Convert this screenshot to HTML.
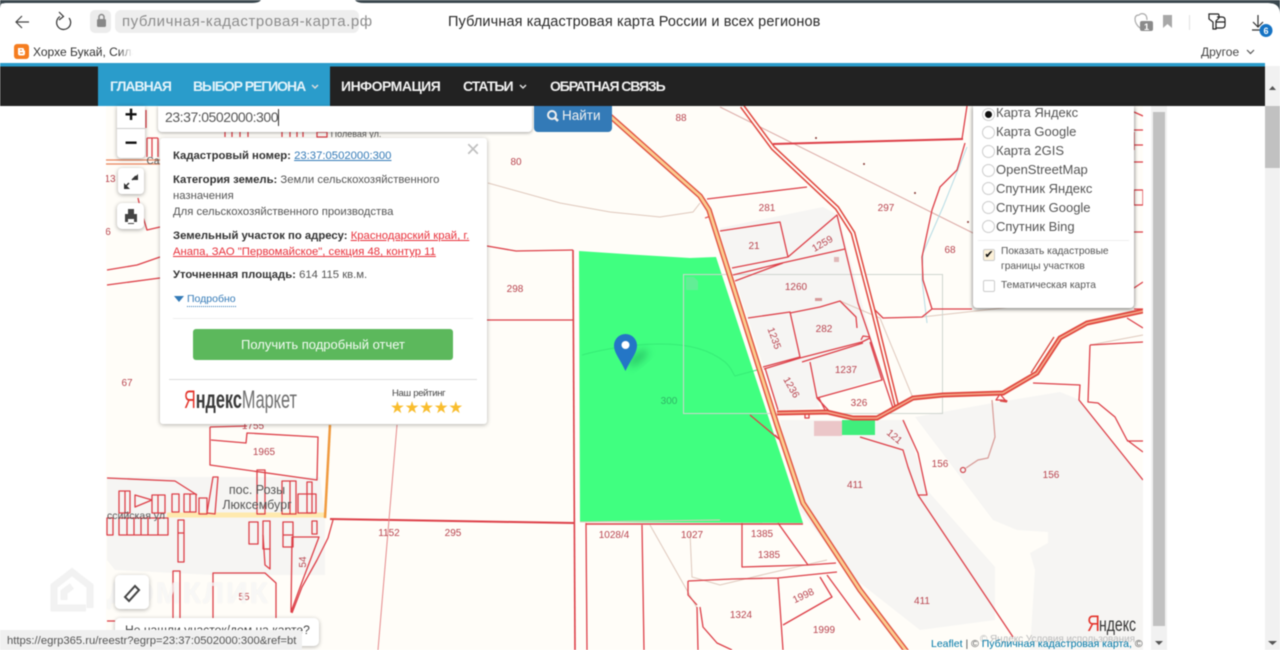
<!DOCTYPE html>
<html lang="ru"><head><meta charset="utf-8"><title>Публичная кадастровая карта</title>
<style>
html,body{margin:0;padding:0;width:1280px;height:650px;overflow:hidden;background:#fff}
body{font-family:"Liberation Sans","Noto Sans CJK SC",sans-serif;position:relative;color:#333}
#w{position:absolute;inset:0;width:1280px;height:650px;overflow:hidden;filter:blur(.4px)}
.a{position:absolute;white-space:nowrap}
svg{position:absolute;left:0;top:0}
.nav{font-weight:bold;font-size:14px;color:#f2f2f2;top:78px;line-height:16px}
.p{font-size:11.3px;color:#555;line-height:14px;left:173px}
.p b{color:#333}
.p a{text-decoration:underline}
.rb{left:996px;font-size:13px;color:#555;line-height:15px}
.r{left:982px;width:11px;height:11px;border:1px solid #ccc;border-radius:50%;background:#fff}
.ck{font-size:10.2px;color:#555;line-height:12px;left:1001px}
</style></head><body><div id="w">
<svg width="1280" height="650" viewBox="0 0 1280 650" font-family="Liberation Sans, sans-serif">
<defs><clipPath id="m"><rect x="106" y="106" width="1037" height="544"/></clipPath>
<filter id="b" x="-50%" y="-50%" width="200%" height="200%"><feGaussianBlur stdDeviation="4"/></filter></defs>
<g clip-path="url(#m)">
<rect x="106" y="106" width="1037" height="544" fill="#fffdf8"/>
<g fill="#f6f5f3">
<path d="M720 228 823 207 838 215 882 377 817 398 820 408 778 410 722 240Z"/>
<path d="M915 417 993 403 1060 392 1080 400 1143 480V650H1030L1035 570 1030 553 1048 543V532L1017 530 993 520Z"/>
<path d="M780 420H905L927 490 995 567V620L920 630 850 575 800 510Z"/>
<path d="M107 477H320L325 518V575H213L115 570 107 560Z"/>
</g>
<path d="M167 515H325" stroke="#ffe9ae" stroke-width="5" fill="none"/>
<path d="M579 251 640 255 690 258 716 257 803 523 580 522Z" fill="#40ff80"/>
<rect x="814" y="421" width="28" height="15" fill="#ebc6c8"/>
<rect x="842" y="420" width="33" height="15" fill="#40ee7c"/>
<!-- faint brown -->
<g fill="none" stroke="#dfc8bc" stroke-width="1">
<path d="M488 183 560 203 610 212 660 217 693 212 700 203"/>
<path d="M650 525 697 608M690 533 692 577 720 585 770 573 827 560"/>
<path d="M580 522 720 520"/>
<path d="M582 355C600 350 630 344 660 344S710 350 725 362C732 368 733 374 735 376L757 370" stroke="#36ec76"/>
<path d="M840 301 880 318 913 398M922 317 1030 305M1090 345 1143 335"/>
</g>
<path d="M720 107 973 233" stroke="#dcaaa6" stroke-width="1" fill="none"/>
<path d="M967 147 943 207 923 253 922 280 927 323" stroke="#b5dbe4" stroke-width="1" fill="none"/>
<path d="M992 400 995 437 988 458 978 460 966 468" stroke="#d79a96" stroke-width="1.2" fill="none"/>
<circle cx="963" cy="470" r="2.5" fill="none" stroke="#d0474f" stroke-width="1.2"/>
<!-- faint image rect -->
<rect x="683.500" y="274.500" width="259" height="139" fill="none" stroke="#cfd5cf" stroke-width="1"/>
<path d="M686 277h8l4 4v9h-12z" fill="#62ee96"/>
<!-- thin red lines -->
<g fill="none" stroke="#dd4049" stroke-width="1.3" stroke-linejoin="round">
<path d="M707 199 807 187"/>
<path d="M720 231 780 222 788 257 732 268"/>
<path d="M788 257 837 215 858 303 870 338 893 408"/>
<path d="M733 275 782 263 845 249M735 281 783 263"/>
<path d="M748 318 790 312 800 357 763 367M790 313 820 307 840 301 856 317 857 328M764 369 800 358 862 342 870 338M802 362 863 343"/>
<path d="M810 362 817 398 882 380 870 342M765 368 778 410M817 398 830 412M819 398 826 412"/>
<path d="M773 144 963 139" stroke-width="2"/>
<path d="M967 106 962 139M965 143 957 170 940 187 932 210 922 257 923 280 932 309 972 309M932 309 922 317 883 318 875 310"/>
<path d="M573 250 575 650" stroke-width="1.600"/>
<path d="M487 246 516 251 573 250M487 320 573 320M586 523 587 650M642 525 644 650"/>
<path d="M107 270 137 265 160 257M107 285 160 278M138 198 140 207 147 230 160 227"/>
<path d="M586 524H803" stroke-width="1.600"/>
<path d="M330 519 574 523" stroke-width="2"/>
<path d="M397 425 378 650" stroke="#e58a8c" stroke-width="1"/>
<path d="M107 621H115"/>
<path d="M742 523V567L808 565 836 563M778 523 808 565M688 581 732 579 778 578 837 572M688 581V595L697 605M697 607 698 650M700 607 703 627 717 643 732 650M778 578 783 650M783 625 832 597 820 577M827 575 860 620"/>
<path d="M210 427 210 465 317 480 318 437 247 433 246 443 211 440M247 426 210 427"/>
<path d="M107 478 175 481 197 495"/>
<rect x="119" y="491" width="11" height="22"/><path d="M125 491V513M135 495 152 500 135 507ZM152 495H165V513H152ZM158 495V513"/>
<rect x="172" y="494" width="7" height="18"/><rect x="184" y="494" width="12" height="18"/><path d="M190 494V512"/><rect x="199" y="498" width="8" height="16"/><path d="M207 513 213 477H218L215 514Z"/>
<rect x="257" y="470" width="8" height="44"/><rect x="282" y="481" width="14" height="33"/><path d="M290 481V514"/><rect x="298" y="494" width="18" height="19"/><rect x="307" y="482" width="5" height="31"/>
<rect x="107" y="518" width="6" height="17"/><rect x="119" y="518" width="49" height="17"/><path d="M127 518V535M134 518V535M141 518V535M148 518V535M158 518V535"/>
<rect x="178" y="520" width="6" height="42"/><path d="M178 533H184"/><rect x="249" y="522" width="9" height="22"/><rect x="263" y="521" width="7" height="28"/><path d="M263 535 265 565 270 569V549"/><rect x="283" y="522" width="10" height="25"/><path d="M283 535H293"/><rect x="312" y="521" width="5" height="13"/>
<path d="M292 537H319L302 582 291 612ZM333 520 328 538 317 560 302 587 292 613"/>
<rect x="173" y="571" width="7" height="70"/><path d="M213 640V573H265L276 583V640"/>
<path d="M147 138V157M152 138V157M158 138V157M147 138H158M120 112 121 122"/>
<path d="M146 110V128"/><path d="M106 160H160M106 164H160" stroke="#e9855e"/>
<path d="M225 130V137M232 130V137M240 130V137M248 130V137M282 130V137M290 130V137M297 130V137M303 130V137M317 132H327V137H317Z"/>
<path d="M1090 345 1143 342M1090 345 1088 402 1098 403 1115 417 1127 440 1143 452M1127 441H1143"/>
<path d="M1033 383 1080 385 1079 400 1143 480"/>
<path d="M860 437 903 450 908 467 918 495 927 495 918 453 903 420M918 495 1013 637"/>
<path d="M1127 318 1143 328M1134 112 1143 116M1134 145H1143M1134 130H1143M1134 132V150M1134 162H1143M1134 190H1143V205H1134ZM1134 232H1143M1134 288 1143 282M1134 309H1143"/>
<path d="M1000 394 1005 400 1007 401 1002 400H996Z"/>
<path d="M775 435 780 440 750 415"/><rect x="805" y="414" width="4" height="4"/>
<path d="M861 340 863 336 870 337"/>
<path d="M705 218 711 216 775 418" stroke="#e65a55"/>
</g>
<!-- roads -->
<path d="M610 116 700 196 709 210 777 425 803 503 860 590 907 652" fill="none" stroke="#e0503f" stroke-width="5.500" stroke-linejoin="round"/>
<path d="M610 116 700 196 709 210 777 425 803 503 860 590 907 652" fill="none" stroke="#fbcd90" stroke-width="2.800" stroke-linejoin="round"/>
<path d="M742 106 773 148 837 208 853 233 873 310 897 407" fill="none" stroke="#e0473f" stroke-width="5"/>
<path d="M742 106 773 148 837 208 853 233 873 310 897 407" fill="none" stroke="#fffdf8" stroke-width="2"/>
<path d="M777 413 827 412 853 418 877 418 913 398 943 395 1003 393 1037 373 1060 338 1087 323 1143 311" fill="none" stroke="#e0473f" stroke-width="5"/>
<path d="M777 413 827 412 853 418 877 418 913 398 943 395 1003 393 1037 373 1060 338 1087 323 1143 311" fill="none" stroke="#f4a98a" stroke-width="1.600"/>
<path d="M330 425 325 518" stroke="#f09a3e" stroke-width="2.500"/>
<path d="M1031 373 1054 337M1000 401 1007 402" stroke="#d8473f" stroke-width="1.300" fill="none"/>
<g fill="#8a3d3a"><circle cx="816" cy="138" r="1"/><circle cx="864" cy="164" r="1"/><circle cx="915" cy="193" r="1"/><circle cx="968" cy="222" r="1"/></g>
<rect x="815" y="298" width="7" height="3" fill="#d69a9a"/><rect x="834" y="257" width="5" height="5" fill="#e0b8b8"/>
<!-- labels -->
<g font-size="10" fill="#b8444f" text-anchor="middle">
<text x="516" y="165">80</text><text x="681" y="121">88</text><text x="767" y="211">281</text><text x="886" y="211">297</text><text x="754" y="249">21</text><text x="822" y="247" transform="rotate(-30 822 243)">1259</text><text x="950" y="253">68</text><text x="796" y="290">1260</text><text x="515" y="292">298</text><text x="775" y="342" transform="rotate(70 775 338)">1235</text><text x="824" y="332">282</text><text x="846" y="373">1237</text><text x="792" y="391" transform="rotate(60 792 387)">1236</text><text x="859" y="406">326</text><text x="669" y="404" fill="#2fb565">300</text><text x="895" y="440" transform="rotate(40 895 436)">121</text><text x="940" y="467">156</text><text x="1051" y="478">156</text><text x="855" y="488">411</text><text x="922" y="604">411</text><text x="264" y="455">1965</text><text x="389" y="536">1152</text><text x="453" y="536">295</text><text x="614" y="538">1028/4</text><text x="692" y="538">1027</text><text x="762" y="537">1385</text><text x="769" y="558">1385</text><text x="302" y="566" transform="rotate(-90 302 562)">54</text><text x="244" y="600">55</text><text x="741" y="618">1324</text><text x="803" y="599" transform="rotate(-25 803 595)">1998</text><text x="824" y="633">1999</text><text x="253" y="429">1755</text><text x="127" y="386">67</text><text x="110" y="182">13</text><text x="108" y="235">6</text>
</g>
<g fill="#555" text-anchor="middle"><text x="257" y="494" font-size="12.500">пос. Розы</text><text x="257" y="509" font-size="12.500">Люксембург</text><text x="136" y="519" font-size="10.500">ссийская ул</text><text x="356" y="137" font-size="9">Полевая ул.</text><text x="153" y="164" font-size="10">Са</text></g>
<text x="1087" y="631" font-size="22" fill="#e3342b" textLength="13" lengthAdjust="spacingAndGlyphs">Я</text><text x="1099" y="631" font-size="19" fill="#333" textLength="37" lengthAdjust="spacingAndGlyphs">ндекс</text>
<text x="980" y="642" font-size="10" fill="#bbb" textLength="155" lengthAdjust="spacing">© Яндекс  Условия использования</text>
<!-- pin -->
<ellipse cx="638" cy="358" rx="12" ry="5" transform="rotate(-40 638 358)" fill="#1fa558" opacity=".55" filter="url(#b)"/>
<path d="M625.500 371C620 359 614 353 614 345.500A11.500 11.500 0 0 1 637 345.500C637 353 631 359 625.500 371Z" fill="#2476c6"/>
<circle cx="625.500" cy="345" r="4" fill="#fff"/>
</g>
<!-- inner scrollbar -->
<rect x="1143" y="106" width="8" height="544" fill="#fff"/>
<rect x="1151" y="106" width="16" height="544" fill="#f1f1f1"/>
<rect x="1153" y="112" width="12" height="514" fill="#c1c1c1"/>
<path d="M1155 641h8l-4 4z" fill="#555"/>
<!-- outer scrollbar -->
<rect x="1265" y="66" width="15" height="584" fill="#f1f1f1"/>
<rect x="1265" y="106" width="15" height="62" fill="#c1c1c1"/>
<path d="M1269 90h7l-3.500-4z" fill="#555"/><path d="M1268 641h9l-4.500 4z" fill="#555"/>
<!-- chrome -->
<rect width="1280" height="3.500" fill="#3a474e"/>
<path d="M0 8Q0 3 6 3H252Q259 3 261 0H355Q357 3 364 3H1268Q1280 3 1280 14V63H0Z" fill="#fff"/>
<path d="M0 0H6Q0 3 0 8ZM1268 3H1280V14Q1280 3 1268 3Z" fill="#3a474e"/>
<rect y="63" width="1265" height="3.500" fill="#2a9ccb"/><rect x="1265" y="63" width="15" height="3" fill="#fff"/>
<rect y="66.500" width="1265" height="39.500" fill="#222"/>
<rect x="98" y="66" width="232" height="40" fill="#2a9ccb"/>
<!-- chrome icons -->
<g fill="none" stroke="#333" stroke-width="1.200">
<path d="M16 22H29M22 16 16 22 22 28" stroke="#444"/>
<path d="M69 18A7 7 0 1 1 60 16.500" /><path d="M59 12 63.500 16.500 59 20"/>
<path d="M1140 28Q1135 24 1135 19 1135 15 1139 15 1141 13 1144 14 1147 15 1147 20" stroke="#aaa"/>
<path d="M1163 15H1172V28L1167.500 24 1163 28Z" fill="#a8a8a8" stroke="none"/>
<path d="M1189.500 15V30" stroke="#e5e5e5"/>
<path d="M1209 14H1218Q1219 14 1219 16V18L1216 21V29H1213V22L1209 19ZM1217 17H1222Q1225 17 1225 20V25Q1225 28 1222 28H1216M1216 22H1225" stroke="#222"/>
<path d="M1258 15V27M1253 22 1258 27 1263 22M1252 30H1262" stroke="#333"/>
<path d="M1247 50 1250.500 53.500 1254 50" stroke="#555"/>
<path d="M312 85 315 88 318 85M520 85 523 88 526 85" stroke="#ddd" stroke-width="1.500"/>
</g>
<rect x="90" y="10" width="21" height="23" rx="5" fill="#ececec"/>
<rect x="97" y="19" width="9" height="8" rx="1.500" fill="#888"/><path d="M99 19V17A2.500 2.500 0 0 1 104 17V19" fill="none" stroke="#888" stroke-width="1.500"/>
<rect x="115" y="10" width="244" height="23" rx="6" fill="#eeeeee"/>
<rect x="1140" y="21" width="13" height="10" rx="2" fill="#8a8a8a"/><text x="1146.500" y="30" font-size="9.500" font-weight="bold" fill="#fff" text-anchor="middle">1</text>
<circle cx="1266" cy="30.500" r="6.500" fill="#1573c4"/><text x="1266" y="34" font-size="9" font-weight="bold" fill="#fff" text-anchor="middle">6</text>
<rect x="14" y="44" width="15" height="15" rx="3" fill="#f57d20"/><path d="M18 48H22.500A1.500 1.500 0 0 1 24 50V50.500H25V53.500A2 2 0 0 1 23 55.500H20A2 2 0 0 1 18 53.500Z" fill="#fff"/><path d="M20 50H22M20 53H23" stroke="#f57d20"/>
<!-- DomClick logo -->
<path d="M90 608V586L72 572 54 586V608H86M72 586 64 592V600" fill="none" stroke="#f2f2f2" stroke-width="7"/>
</svg>
<!-- chrome text -->
<div class="a" style="left:122px;top:14px;font-size:15px;color:#8c8c8c;line-height:16px;letter-spacing:.55px">публичная-кадастровая-карта.рф</div>
<div class="a" style="left:448px;top:14px;font-size:14.500px;color:#2a2a2a;line-height:16px;letter-spacing:.12px">Публичная кадастровая карта России и всех регионов</div>
<div class="a" style="left:33px;top:45px;font-size:12px;color:#333;line-height:14px;width:100px;overflow:hidden;-webkit-mask-image:linear-gradient(90deg,#000 85%,transparent)">Хорхе Букай, Сила</div>
<div class="a" style="left:1201px;top:45px;font-size:12px;color:#444;line-height:14px">Другое</div>
<!-- nav -->
<div class="a nav" style="left:110px;color:#e4f3fa;letter-spacing:-1px">ГЛАВНАЯ</div>
<div class="a nav" style="left:193px;color:#e4f3fa;letter-spacing:-1.05px">ВЫБОР РЕГИОНА</div>
<div class="a nav" style="left:341px;letter-spacing:-.5px">ИНФОРМАЦИЯ</div>
<div class="a nav" style="left:463px;letter-spacing:-1px">СТАТЬИ</div>
<div class="a nav" style="left:550px;letter-spacing:-1.1px">ОБРАТНАЯ СВЯЗЬ</div>
<!-- map controls -->
<div class="a" style="left:117px;top:106px;width:28px;height:52px;background:#fff;border-radius:0 0 4px 4px;box-shadow:0 1px 4px rgba(0,0,0,.35)">
<div style="height:22px;border-bottom:1px solid #ccc;font:bold 22px/18px 'Liberation Sans',sans-serif;text-align:center;color:#111">+</div>
<div style="font:bold 22px/28px 'Liberation Sans',sans-serif;text-align:center;color:#111">−</div></div>
<div class="a" style="left:158px;top:106px;width:374px;height:26px;background:#fff;border-radius:0 0 4px 4px;box-shadow:0 1px 3px rgba(0,0,0,.35)"></div>
<div class="a" style="left:165px;top:109px;font-size:14px;color:#555;line-height:17px;letter-spacing:-.45px;border-right:1px solid #333">23:37:0502000:300</div>
<div class="a" style="left:534px;top:106px;width:78px;height:26px;background:#337ab7;border-radius:0 0 4px 4px"></div>
<svg width="1280" height="650" style="pointer-events:none"><circle cx="552" cy="115" r="4" fill="none" stroke="#eee" stroke-width="2"/><path d="M555 118 558 121" stroke="#eee" stroke-width="2.500"/></svg>
<div class="a" style="left:562px;top:108px;font-size:13.500px;color:#f0f0f0;line-height:16px">Найти</div>
<div class="a" style="left:118px;top:168px;width:26px;height:26px;background:#fff;border-radius:4px;box-shadow:0 1px 4px rgba(0,0,0,.35)"></div>
<div class="a" style="left:117px;top:203px;width:27px;height:26px;background:#fff;border-radius:5px;box-shadow:0 1px 4px rgba(0,0,0,.35)"></div>
<svg width="1280" height="650"><path d="M125 187 129 183M136 176 132 180" stroke="#333" stroke-width="1.500"/><path d="M124 183V189H130ZM138 174V180H132Z" fill="#333"/><path d="M125 214H137V222H125ZM128 209H134V214H128ZM128 219H134V224H128Z" fill="#444"/><path d="M128 219H134V223H128Z" fill="#fff"/></svg>
<!-- popup -->
<div class="a" style="left:160px;top:138px;width:327px;height:286px;background:#fff;border-radius:3px;box-shadow:0 1px 4px rgba(0,0,0,.3)"></div>
<div class="a" style="left:466px;top:139px;font-size:24px;line-height:22px;color:#c0c0c0">×</div>
<div class="a p" style="top:149px"><b>Кадастровый номер:</b> <a style="color:#337ab7">23:37:0502000:300</a></div>
<div class="a p" style="top:173px"><b>Категория земель:</b> Земли сельскохозяйственного</div>
<div class="a p" style="top:189px">назначения</div>
<div class="a p" style="top:205px">Для сельскохозяйственного производства</div>
<div class="a p" style="top:229px"><b>Земельный участок по адресу:</b> <a style="color:#e8303a">Краснодарский край, г.</a></div>
<div class="a p" style="top:245px"><a style="color:#e8303a">Анапа, ЗАО "Первомайское", секция 48, контур 11</a></div>
<div class="a p" style="top:268px"><b>Уточненная площадь:</b> 614 115 кв.м.</div>
<div class="a" style="left:174px;top:296px;width:0;height:0;border:5px solid transparent;border-top:6px solid #337ab7;border-bottom:0"></div>
<div class="a" style="left:187px;top:293px;font-size:10.500px;line-height:13px;color:#337ab7;border-bottom:1px dotted #337ab7">Подробно</div>
<div class="a" style="left:173px;top:318px;width:300px;height:1px;background:#eee"></div>
<div class="a" style="left:193px;top:329px;width:260px;height:31px;background:#5cb85c;border-radius:3px;color:#f3fbf3;font-size:13px;line-height:31px;text-align:center">Получить подробный отчет</div>
<div class="a" style="left:169px;top:379px;width:308px;height:1px;background:#ddd"></div>
<div class="a" style="left:184px;top:386px;font-size:25px;line-height:28px;color:#333;transform-origin:0 0;transform:scaleX(.65)"><span style="color:#e3342b">Я</span><span style="font-weight:bold;color:#3a3a3a">ндекс</span><span style="color:#6f6f6f">Маркет</span></div>
<div class="a" style="left:392px;top:388px;font-size:9.500px;line-height:11px;color:#444;letter-spacing:-.3px">Наш рейтинг</div>
<div class="a" style="left:390px;top:399px;font-size:16.500px;line-height:18px;color:#f9bd2d;letter-spacing:-.2px;font-family:'DejaVu Sans',sans-serif">★★★★★</div>
<!-- layer control -->
<div class="a" style="left:973px;top:106px;width:161px;height:202px;background:#fff;border-radius:0 0 4px 4px;box-shadow:0 1px 4px rgba(0,0,0,.6)"></div>
<div class="a r" style="top:108px"></div><div class="a" style="left:985px;top:111px;width:7px;height:7px;border-radius:50%;background:#111"></div>
<div class="a r" style="top:126px"></div><div class="a r" style="top:145px"></div><div class="a r" style="top:164px"></div><div class="a r" style="top:182px"></div><div class="a r" style="top:201px"></div><div class="a r" style="top:220px"></div>
<div class="a rb" style="top:105px">Карта Яндекс</div>
<div class="a rb" style="top:124px">Карта Google</div>
<div class="a rb" style="top:143px">Карта 2GIS</div>
<div class="a rb" style="top:162px">OpenStreetMap</div>
<div class="a rb" style="top:181px">Спутник Яндекс</div>
<div class="a rb" style="top:200px">Спутник Google</div>
<div class="a rb" style="top:219px">Спутник Bing</div>
<div class="a" style="left:978px;top:240px;width:151px;height:1px;background:#eee"></div>
<div class="a" style="left:983px;top:249px;width:10px;height:10px;border:1px solid #ccc;border-radius:2px;background:#fdf1d8;color:#111;font:bold 11px/10px 'DejaVu Sans',sans-serif;text-align:center">✔</div>
<div class="a ck" style="top:246px">Показать кадастровые</div>
<div class="a ck" style="top:261px">границы участков</div>
<div class="a" style="left:983px;top:280px;width:10px;height:10px;border:1px solid #ccc;border-radius:2px;background:#fff"></div>
<div class="a ck" style="top:280px">Тематическая карта</div>
<!-- bottom -->
<div class="a" style="left:107px;top:576px;font:bold 30px/36px 'Liberation Sans',sans-serif;color:rgba(255,255,255,.72);letter-spacing:2px;text-shadow:0 0 1px rgba(0,0,0,.1)">ДОМКЛИК</div>
<div class="a" style="left:115px;top:575px;width:34px;height:34px;background:rgba(255,255,255,.95);border-radius:5px;box-shadow:0 1px 4px rgba(0,0,0,.3)"></div>
<svg width="1280" height="650"><path d="M125 597 135 586 139 590 129 601Z" fill="#fff" stroke="#444" stroke-width="2"/></svg>
<div class="a" style="left:115px;top:618px;width:204px;height:28px;background:#fff;border-radius:5px;box-shadow:0 1px 4px rgba(0,0,0,.3)"></div>
<div class="a" style="left:125px;top:623px;font-size:12.100px;line-height:15px;color:#444">Не нашли участок/дом на карте?</div>
<div class="a" style="left:0;top:630px;width:302px;height:20px;background:#f0f0f0;border-radius:0 3px 0 0"></div>
<div class="a" style="left:7px;top:635px;font-size:11.270px;line-height:13px;color:#555">https://egrp365.ru/reestr?egrp=23:37:0502000:300&amp;ref=bt</div>
<div class="a" style="left:931px;top:638px;font-size:10.500px;line-height:13px;color:#555"><span style="color:#0078a8">Leaflet</span> | © <span style="color:#0078a8">Публичная кадастровая карта,</span> ©</div>
</div></body></html>
